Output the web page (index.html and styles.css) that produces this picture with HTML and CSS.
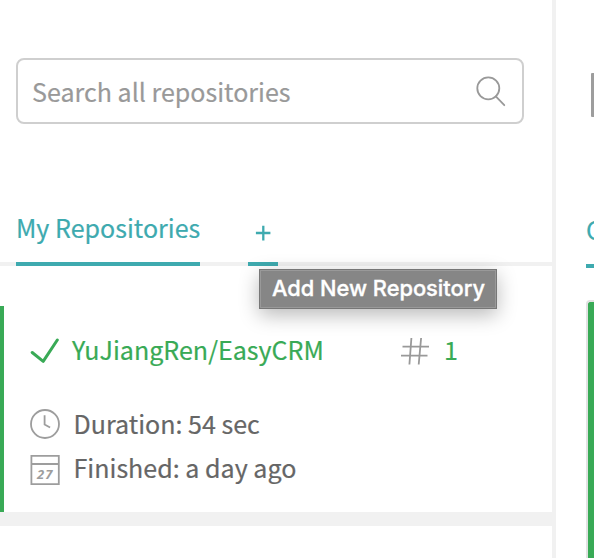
FILE: index.html
```
<!DOCTYPE html>
<html lang="en">
<head>
<meta charset="utf-8">
<title>Repositories</title>
<link rel="stylesheet" href="styles.css">
</head>
<body>
<div class="app">
  <aside class="sidebar">
    <div class="search">
      <span class="search-label">Search all repositories</span>
      <svg class="search-icon" width="30" height="31" viewBox="0 0 30 31" fill="none" stroke="#999" stroke-width="1.8" stroke-linecap="round"><circle cx="12.3" cy="12.3" r="11"/><path d="M19.8 20.3L28.3 29.2"/></svg>
    </div>
    <nav class="tabs">
      <a class="tab"><span class="tab-label">My Repositories</span></a>
      <a class="tab tab-add"><svg width="16" height="16" viewBox="0 0 16 16" stroke="#3eaaaf" stroke-width="2.3"><path d="M.9 8h14.5M8.3 .7v14.8"/></svg>
        <span class="tooltip"><span class="tooltip-label">Add New Repository</span></span>
      </a>
    </nav>
    <article class="card">
      <div class="row title-row">
        <svg class="check" width="30" height="26" viewBox="0 0 30 26" fill="none" stroke="#39aa56" stroke-width="3" stroke-linecap="round" stroke-linejoin="round"><path d="M2.2 14.5L13.2 23.3L27.3 2"/></svg>
        <span class="repo">YuJiangRen/EasyCRM</span>
        <svg class="hash" width="28" height="28" viewBox="0 0 28 28" fill="none" stroke="#999" stroke-width="1.8"><path d="M1.5 9.7h26.5M0 18.7h26.5M10.4 1L8.4 27.5M20.1 1l-2.4 26.5"/></svg>
        <span class="number">1</span>
      </div>
      <div class="row">
        <svg class="icon" width="30" height="30" viewBox="0 0 30 30" fill="none" stroke="#9d9d9d" stroke-width="1.8"><circle cx="15" cy="15" r="14"/><path d="M14.6 6.2v9.3l5.5 3"/></svg>
        <span class="meta duration">Duration: 54 sec</span>
      </div>
      <div class="row finished-row">
        <svg class="icon calendar" width="30" height="30" viewBox="0 0 30 30" fill="none" stroke="#9d9d9d" stroke-width="1.8"><path d="M1.4.9h27.4v28.2h-27.4zM1.4 9h27.4"/><text class="date" x="7" y="23.5">27</text></svg>
        <span class="meta finished">Finished: a day ago</span>
      </div>
    </article>
  </aside>
  <main class="main">
    <div class="heading-edge"></div>
    <div class="main-tab">C</div>
    <div class="build"></div>
  </main>
</div>
</body>
</html>
```
FILE: styles.css
```
* { box-sizing: border-box; }
body {
  margin: 0;
  background: #fff;
  font-family: "Noto Sans CJK SC", "Open Sans", sans-serif;
  font-size: 25.05px;
  line-height: 38px;
  -webkit-text-stroke: .2px currentColor;
}
svg { display: block; flex: none; }
span { white-space: nowrap; }
.app { display: flex; width: 594px; height: 558px; overflow: hidden; }
.sidebar { width: 556px; flex: none; border-right: 4px solid #f1f1f1; padding-top: 58px; }
.search {
  display: flex;
  align-items: center;
  justify-content: space-between;
  width: 508px;
  height: 66px;
  margin-left: 16px;
  padding: 0 16px 0 14px;
  border: 2px solid #cfcfcf;
  border-radius: 8px;
  color: #999;
}
.tabs { display: flex; gap: 48px; height: 142px; padding: 0 16px; align-items: flex-end; box-shadow: inset 0 -4px #f1f1f1; }
.tab { display: flex; width: 184px; height: 60px; padding-top: 2px; border-bottom: 4px solid #3eaaaf; color: #3eaaaf; }
.tab-add { position: relative; width: 30px; padding: 19px 0 0 7px; }
.tooltip {
  position: absolute;
  left: 11px;
  top: 63px;
  width: 238px;
  height: 40px;
  padding-left: 12px;
  border: 1px solid #777;
  outline: 1px solid #999;
  outline-offset: -2px;
  background: #868686;
  box-shadow: 0 6px 20px rgba(0, 0, 0, .28);
  color: #fff;
  font: 500 21.8px/37px Inter, sans-serif;
  -webkit-text-stroke: .35px currentColor;
}
.card { height: 220px; margin-top: 40px; padding: 26px 0 0 29px; border-bottom: 14px solid #f1f1f1; background: linear-gradient(#39aa56, #39aa56) 0 0 / 4px 206px no-repeat; }
.row { display: flex; align-items: center; height: 38px; }
.title-row { margin-bottom: 35px; color: #39aa56; }
.check { margin-left: 1px; }
.repo { width: 252px; margin-left: 12px; padding-bottom: 4px; }
.hash { margin-left: 77px; }
.number { margin-left: 15px; padding-bottom: 4px; }
.finished-row { margin-top: 7px; }
.icon { margin-left: 1px; }
.calendar { margin-top: 2px; }
.meta { margin-left: 13.5px; color: #666; }
.duration { padding-bottom: 2px; }
.finished { padding-bottom: 5px; }
.date { font: italic 700 13px "Noto Sans", sans-serif; fill: #9d9d9d; stroke: none; letter-spacing: 1.2px; -webkit-text-stroke: 0; }
.main { width: 38px; padding: 73px 0 0 30px; overflow: hidden; }
.heading-edge { height: 44px; margin-left: 5px; background: #9d9d9d; border-radius: 1px 0 0 1px; }
.main-tab { height: 61px; margin-top: 90px; padding-top: 3px; border-bottom: 4px solid #3eaaaf; color: #3eaaaf; }
.build { height: 300px; margin-top: 32px; border: 2px solid #e2e2e2; border-right: 0; border-radius: 4px 0 0 0; background: #39aa56; }
```
